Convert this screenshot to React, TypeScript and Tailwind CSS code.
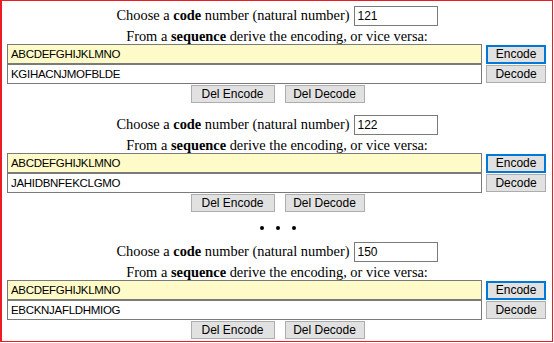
import React from 'react';

interface Block {
  code: number;
  plain: string;
  encoded: string;
}

const blocks: Block[] = [
  { code: 121, plain: 'ABCDEFGHIJKLMNO', encoded: 'KGIHACNJMOFBLDE' },
  { code: 122, plain: 'ABCDEFGHIJKLMNO', encoded: 'JAHIDBNFEKCLGMO' },
  { code: 150, plain: 'ABCDEFGHIJKLMNO', encoded: 'EBCKNJAFLDHMIOG' },
];

const sans = "font-['Liberation_Sans',Arial,sans-serif]";

function CodeBlock({ block }: { block: Block }) {
  return (
    <div className="flex flex-col">
      {/* code number */}
      <div className="h-[24px] mt-[3px] flex items-center justify-center gap-[4px]">
        <span>
          Choose a <b>code</b> number (natural number)
        </span>
        <input
          type="text"
          defaultValue={block.code}
          className={`${sans} w-[84px] h-[20px] border border-[#7a7a7a] px-[3px] text-[12px] text-black outline-none`}
        />
      </div>
      <div className="h-[16px] flex items-center justify-center leading-none">
        <span>
          From a <b>sequence</b> derive the encoding, or vice versa:
        </span>
      </div>

      {/* sequences */}
      <div className="h-[20px] flex items-center gap-[4px] pl-[5px] pr-[6px]">
        <input
          type="text"
          defaultValue={block.plain}
          className={`${sans} w-[477px] h-[20px] bg-[#fffbc8] border border-[#7a7a7a] px-[3px] text-[11.5px] tracking-[-0.3px] text-black outline-none`}
        />
        <button
          className={`${sans} w-[60px] h-[19px] bg-[#e1e1e1] border-2 border-[#0078d7] text-[12px] leading-none text-black`}
        >
          Encode
        </button>
      </div>
      <div className="h-[20px] flex items-center gap-[4px] pl-[5px] pr-[6px]">
        <input
          type="text"
          defaultValue={block.encoded}
          className={`${sans} w-[477px] h-[20px] bg-white border border-[#7a7a7a] px-[3px] text-[11.5px] tracking-[-0.3px] text-black outline-none`}
        />
        <button
          className={`${sans} w-[60px] h-[18px] bg-[#e1e1e1] border border-[#adadad] text-[12px] leading-none text-black`}
        >
          Decode
        </button>
      </div>

      {/* delete buttons */}
      <div className="h-[18px] flex justify-center gap-[10px] mt-[1px] mb-[7px] pl-[1px]">
        <button
          className={`${sans} w-[84px] h-[18px] bg-[#e1e1e1] border border-[#adadad] text-[12px] leading-none text-black`}
        >
          Del Encode
        </button>
        <button
          className={`${sans} w-[80px] h-[18px] bg-[#e1e1e1] border border-[#adadad] text-[12px] leading-none text-black`}
        >
          Del Decode
        </button>
      </div>
    </div>
  );
}

export default function App() {
  return (
    <div className="w-[554px] h-[343px] bg-white">
      <div className="w-[553px] h-[342px] border border-l-2 border-[#ed1c24] font-['Liberation_Serif','Times_New_Roman',serif] text-[14.4px] text-black overflow-hidden">
        <CodeBlock block={blocks[0]} />
        <CodeBlock block={blocks[1]} />
        <div className="h-[18px] flex items-center justify-center gap-[12px] pl-[2px]">
          <span className="w-[4px] h-[4px] rounded-full bg-black" />
          <span className="w-[4px] h-[4px] rounded-full bg-black" />
          <span className="w-[4px] h-[4px] rounded-full bg-black" />
        </div>
        <CodeBlock block={blocks[2]} />
      </div>
    </div>
  );
}
